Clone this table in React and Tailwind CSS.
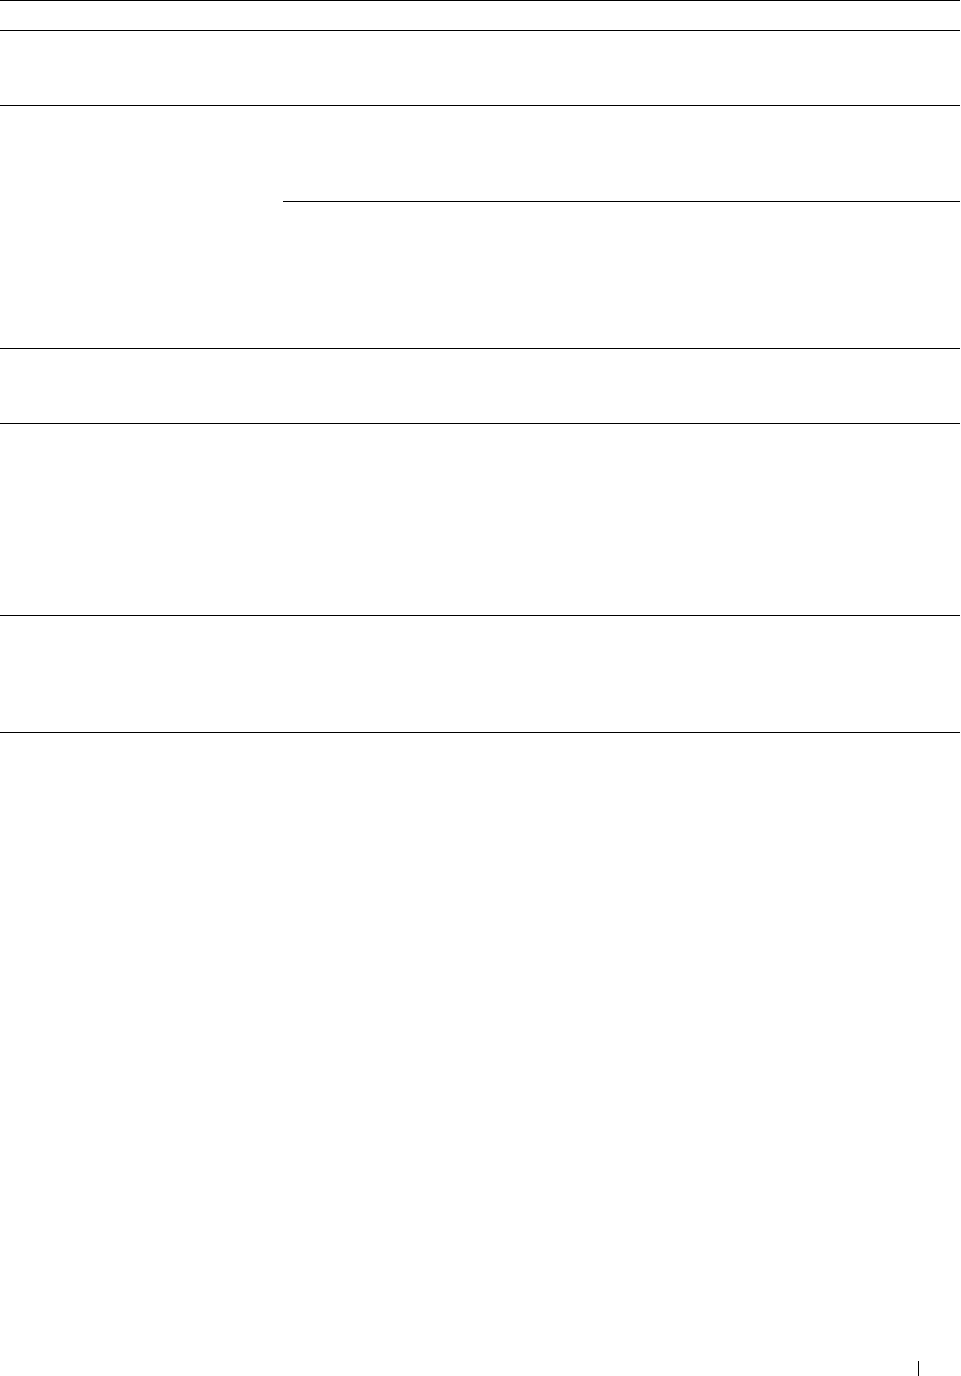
export default function App() {
  return (
    <div className="w-[961px] h-[1376px] bg-white overflow-hidden" style={{ fontFamily: '"Liberation Sans", Arial, sans-serif' }}>
      <div className="w-[960px] border-t border-black">
        <div className="h-[30px] border-b border-black"></div>
        <div className="h-[75px] border-b border-black"></div>
        <div className="h-[243px] border-b border-black flex">
          <div className="w-[283px]"></div>
          <div className="flex-1 flex flex-col">
            <div className="h-[96px] border-b border-black"></div>
            <div className="flex-1"></div>
          </div>
        </div>
        <div className="h-[75px] border-b border-black"></div>
        <div className="h-[192px] border-b border-black"></div>
        <div className="h-[117px] border-b border-black"></div>
      </div>
      <div className="mt-[628px] ml-[918px] w-px h-[15px] bg-black"></div>
    </div>
  );
}
